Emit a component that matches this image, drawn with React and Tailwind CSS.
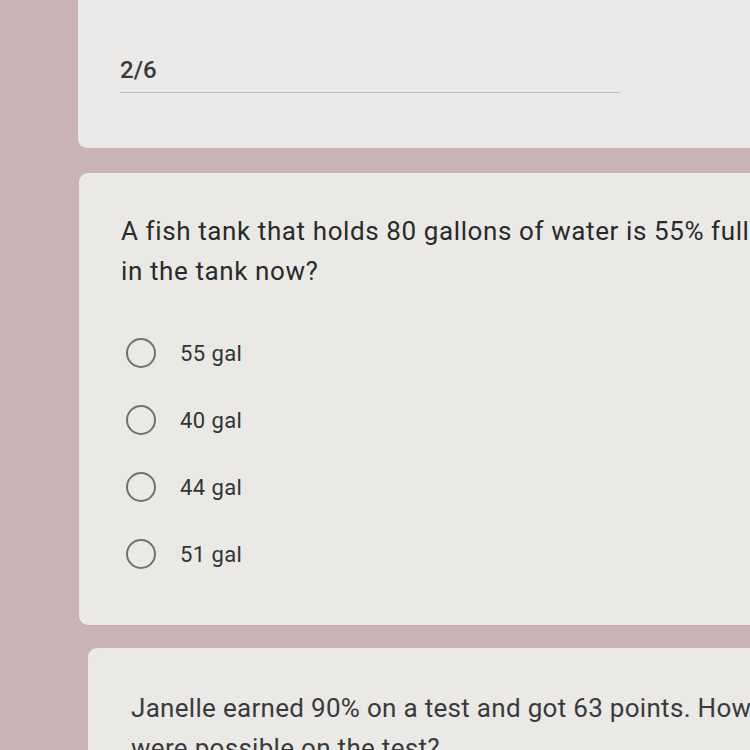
export default function App() {
  const options = ["55 gal", "40 gal", "44 gal", "51 gal"];

  return (
    <div className="w-[750px] h-[750px] overflow-hidden bg-[#cab3b5] font-['Roboto',sans-serif] text-[#2b2b2b]">
      <div className="ml-[78px] w-[820px] h-[148px] bg-[#eae9e7] rounded-b-[9px] pt-[56px] pl-[42px]">
        <div className="text-[24px] font-medium text-[#3a3a3e] leading-[28px]">2/6</div>
        <div className="mt-[8px] w-[500px] h-px bg-[#b9b8c2]"></div>
      </div>

      <div className="mt-[25px] ml-[79px] w-[820px] h-[452px] bg-[#eae9e6] rounded-[9px] pt-[38px] pl-[42px]">
        <div className="text-[26px] tracking-[0.6px] leading-[40px] whitespace-nowrap text-[#2a2a2a]">
          <div>A fish tank that holds 80 gallons of water is 55% full. How much water is</div>
          <div>in the tank now?</div>
        </div>
        <div className="mt-[47px] flex flex-col gap-[37px]">
          {options.map((opt) => (
            <div key={opt} className="flex items-center h-[30px]">
              <div className="ml-[5px] w-[30px] h-[30px] rounded-full border-2 border-[#707070]"></div>
              <span className="ml-[24px] text-[22px] tracking-[0.4px] text-[#333333]">{opt}</span>
            </div>
          ))}
        </div>
      </div>

      <div className="mt-[23px] ml-[88px] w-[820px] h-[200px] bg-[#eae9e6] rounded-[9px] pt-[40px] pl-[43px]">
        <div className="text-[26px] tracking-[0.3px] leading-[40px] whitespace-nowrap text-[#3a3a3c]">
          <div>Janelle earned 90% on a test and got 63 points. How many points</div>
          <div>were possible on the test?</div>
        </div>
      </div>
    </div>
  );
}
